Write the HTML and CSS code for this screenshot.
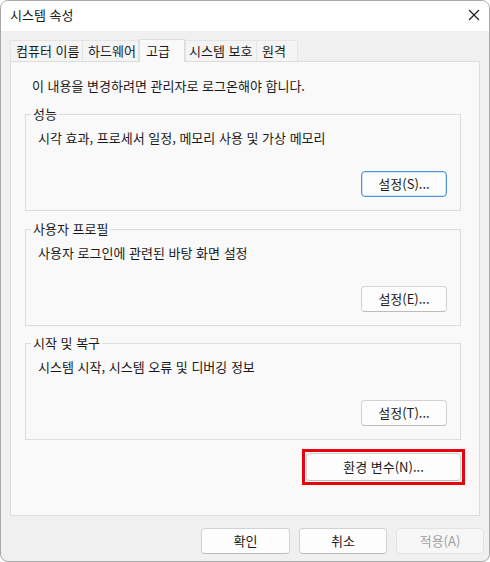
FILE: index.html
```html
<!DOCTYPE html>
<html lang="ko">
<head>
<meta charset="utf-8">
<title>시스템 속성</title>
<link rel="stylesheet" href="styles.css">
</head>
<body>
<div class="window">
  <div class="titlebar">
    <span class="title">시스템 속성</span>
    <span class="close">
      <svg width="12" height="12" viewBox="0 0 12 12"><path d="M1 1 L11 11 M11 1 L1 11" stroke="#1a1a1a" stroke-width="1.1" fill="none"/></svg>
    </span>
  </div>
  <div class="body">
    <div class="tabs">
      <div class="tab t1">컴퓨터 이름</div>
      <div class="tab t2">하드웨어</div>
      <div class="tab t3 active">고급</div>
      <div class="tab t4">시스템 보호</div>
      <div class="tab t5">원격</div>
    </div>
    <div class="panel">
      <div class="info">이 내용을 변경하려면 관리자로 로그온해야 합니다.</div>
      <div class="group g1">
        <div class="legend">성능</div>
        <div class="gtext">시각 효과, 프로세서 일정, 메모리 사용 및 가상 메모리</div>
        <div class="grow"><button class="btn set focused">설정(S)...</button></div>
      </div>
      <div class="group g2">
        <div class="legend">사용자 프로필</div>
        <div class="gtext">사용자 로그인에 관련된 바탕 화면 설정</div>
        <div class="grow"><button class="btn set">설정(E)...</button></div>
      </div>
      <div class="group g3">
        <div class="legend">시작 및 복구</div>
        <div class="gtext">시스템 시작, 시스템 오류 및 디버깅 정보</div>
        <div class="grow"><button class="btn set">설정(T)...</button></div>
      </div>
      <div class="envrow">
        <div class="highlight"><button class="btn env">환경 변수(N)...</button></div>
      </div>
    </div>
    <div class="footer">
      <button class="btn fbtn ok">확인</button>
      <button class="btn fbtn">취소</button>
      <button class="btn fbtn disabled">적용(A)</button>
    </div>
  </div>
</div>
</body>
</html>
```
FILE: styles.css
```css
* { box-sizing: border-box; }
html, body { margin: 0; padding: 0; background: #ffffff; }
body {
  font-family: "Noto Sans CJK KR", "Noto Sans", sans-serif;
  font-size: 13px;
  color: #1a1a1a;
}
.window {
  width: 490px;
  height: 562px;
  border: 1px solid #a8a8a8;
  border-radius: 8px;
  overflow: hidden;
  background: #f0f0f0;
}
.titlebar {
  height: 30px;
  background: #ffffff;
  display: flex;
  align-items: center;
  justify-content: space-between;
  padding-left: 9px;
  padding-right: 9px;
}
.title { line-height: 16px; margin-top: -2px; }
.close { display: flex; width: 12px; height: 12px; margin-top: -2px; }
.body {
  padding: 8px 0 0 9px;
}
.tabs {
  display: flex;
  align-items: flex-end;
  height: 22px;
}
.tab {
  height: 21px;
  line-height: 20px;
  background: #f4f4f4;
  border: 1px solid #e4e4e4;
  border-bottom: none;
  white-space: nowrap;
  color: #1a1a1a;
}
.t1 { width: 73px; padding-left: 5px; }
.t2 { width: 57px; padding-left: 5px; margin-left: -1px; }
.t3 { width: 46px; padding-left: 6px; }
.t4 { width: 72px; padding-left: 3px; }
.t5 { width: 42px; padding-left: 5px; margin-left: -1px; }
.tab.active {
  height: 23px;
  margin-bottom: -1px;
  background: #f9f9f9;
  border-color: #dcdcdc;
  line-height: 21px;
  position: relative;
  z-index: 1;
}
.panel {
  width: 470px;
  height: 455px;
  background: #f9f9f9;
  border: 1px solid #dcdcdc;
  padding: 16px 18px 0 14px;
}
.info {
  line-height: 16px;
  padding-left: 7px;
}
.group {
  border: 1px solid #dcdcdc;
  padding: 0 13px 13px 12px;
}
.g1 { margin-top: 20px; }
.g2 { margin-top: 18px; }
.g3 { margin-top: 17px; }
.legend {
  width: fit-content;
  margin: -9px 0 0 -7px;
  padding: 0 2px;
  background: #f9f9f9;
  line-height: 16px;
}
.gtext {
  margin-top: 8px;
  line-height: 16px;
}
.grow {
  display: flex;
  justify-content: flex-end;
  margin-top: 25px;
}
.btn {
  font-family: "Noto Sans CJK KR", "Noto Sans", sans-serif;
  font-size: 13px;
  color: #1a1a1a;
  background: #fdfdfd;
  border: 1px solid #d2d2d2;
  border-bottom-color: #bcbcbc;
  border-radius: 4px;
  padding: 0;
  line-height: 16px;
}
.set { width: 86px; height: 26px; }
.focused {
  border: 1px solid #4f94dc;
  box-shadow: inset 0 0 0 1px #cfe2f6;
}
.envrow {
  display: flex;
  justify-content: flex-end;
  margin-top: 9px;
  margin-right: -4px;
}
.highlight {
  border: 3px solid #e8000b;
  padding: 1px;
  width: 163px;
  height: 36px;
}
.env { width: 100%; height: 100%; }
.footer {
  display: flex;
  justify-content: flex-end;
  gap: 9px;
  margin-top: 12px;
  padding-right: 5px;
}
.fbtn { width: 88px; height: 26px; }
.ok { width: 89px; }
.disabled {
  color: #a0a0a0;
  background: #f7f7f7;
  border-color: #e2e2e2;
}
```
